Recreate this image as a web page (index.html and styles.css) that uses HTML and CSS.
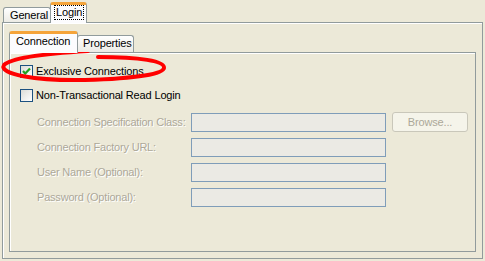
FILE: index.html
```html
<!doctype html>
<html>
<head>
	<meta charset="utf-8">
	<title>Login Properties</title>
	<link rel="stylesheet" href="styles.css">
</head>
<body>
	<div class="tabs outer-tabs">
		<div class="tab">General</div>
		<div class="tab selected"><span class="focus">Login</span></div>
	</div>
	<div class="panel outer-panel">
		<div class="tabs inner-tabs">
			<div class="tab selected wide">Connection</div>
			<div class="tab">Properties</div>
		</div>
		<div class="panel inner-panel">
			<label class="check"><span class="box on"><svg width="11" height="11" viewBox="0 0 11 11"><path d="M2 5 L4.2 7.5 L9 2.5" fill="none" stroke="#21a121" stroke-width="2.2"/></svg></span>Exclusive Connections</label>
			<label class="check"><span class="box"></span>Non-Transactional Read Login</label>
			<div class="fields">
				<span class="lbl">Connection Specification Class:</span>
				<span class="field"></span>
				<span class="btn">Browse...</span>
				<span class="lbl">Connection Factory URL:</span>
				<span class="field"></span>
				<span></span>
				<span class="lbl">User Name (Optional):</span>
				<span class="field"></span>
				<span></span>
				<span class="lbl">Password (Optional):</span>
				<span class="field"></span>
				<span></span>
			</div>
		</div>
	</div>
	<svg class="circle" width="485" height="261" viewBox="0 0 485 261">
		<path d="M88 51 C55 53, 12 57, 4 65 C-2 74, 35 81, 85 80 C125 79, 163 75, 164 68 C165 61, 140 57, 98 57" fill="none" stroke="#f00" stroke-width="4" stroke-linecap="round"/>
	</svg>
</body>
</html>
```

FILE: styles.css
```css
* {box-sizing:border-box;}
body {margin:0; padding:2px 2px 0 2px; width:485px; height:261px; background:#ece9d8; font:11px "Liberation Sans",Arial,sans-serif; letter-spacing:-0.15px; color:#000; position:relative; overflow:hidden;}

.tabs {display:flex; align-items:flex-end; position:relative; z-index:1;}
.tab {height:15px; padding:0 5px; border:1px solid #919b9c; border-bottom:none; border-radius:3px 3px 0 0; background:linear-gradient(#fff,#ecebe5); line-height:14px; white-space:nowrap;}
.tab.selected {height:21px; background:#fcfcfe; border-top:3px solid #f5a43a; padding:0 4px; margin-bottom:-1px; line-height:15px;}

.outer-tabs {padding-left:1px; height:20px;}
.outer-tabs .tab:first-child {width:48px; padding-left:6px;}
.outer-tabs .tab.selected {width:37px; height:21px; margin-left:-1px; padding:0 3px;}
.focus {border:1px dotted #000; padding:0 1px; display:inline-block; line-height:13px;}

.panel {border:1px solid #919b9c; box-shadow:inset 1px 1px 0 #fff;}
.outer-panel {height:237px; padding:8px 6px 7px 6px;}
.inner-tabs {height:21px;}
.inner-tabs .tab {height:17px; width:57px; padding-left:5px; margin-left:-1px;}
.inner-tabs .tab.wide {width:69px; height:22px; margin-left:0; padding-left:6px;}
.inner-panel {height:200px; padding:12px 10px 0 10px;}

.check {display:flex; align-items:center; height:24px; margin-top:-6px; margin-bottom:6px;}
.check + .check {margin-top:-6px;}
.box {width:13px; height:13px; border:1px solid #1c5180; background:linear-gradient(135deg,#dcdcd7,#fff); margin-right:3px; display:flex; align-items:center; justify-content:center;}

.fields {display:grid; grid-template-columns:148px 195px 76px; column-gap:6px; row-gap:6px; margin-top:4px; padding-left:17px;}
.lbl {color:#aca899; line-height:19px; white-space:nowrap; letter-spacing:-0.2px; text-shadow:1px 1px 0 #fff;}
.field {height:19px; border:1px solid #7f9db9; background:#ebeae4;}
.btn {height:20px; margin-top:-1px; border:1px solid #c9c7ba; border-radius:3px; background:#f5f4ea; color:#aca899; text-align:center; line-height:18px;}

.circle {position:absolute; left:0; top:0; pointer-events:none;}
```
